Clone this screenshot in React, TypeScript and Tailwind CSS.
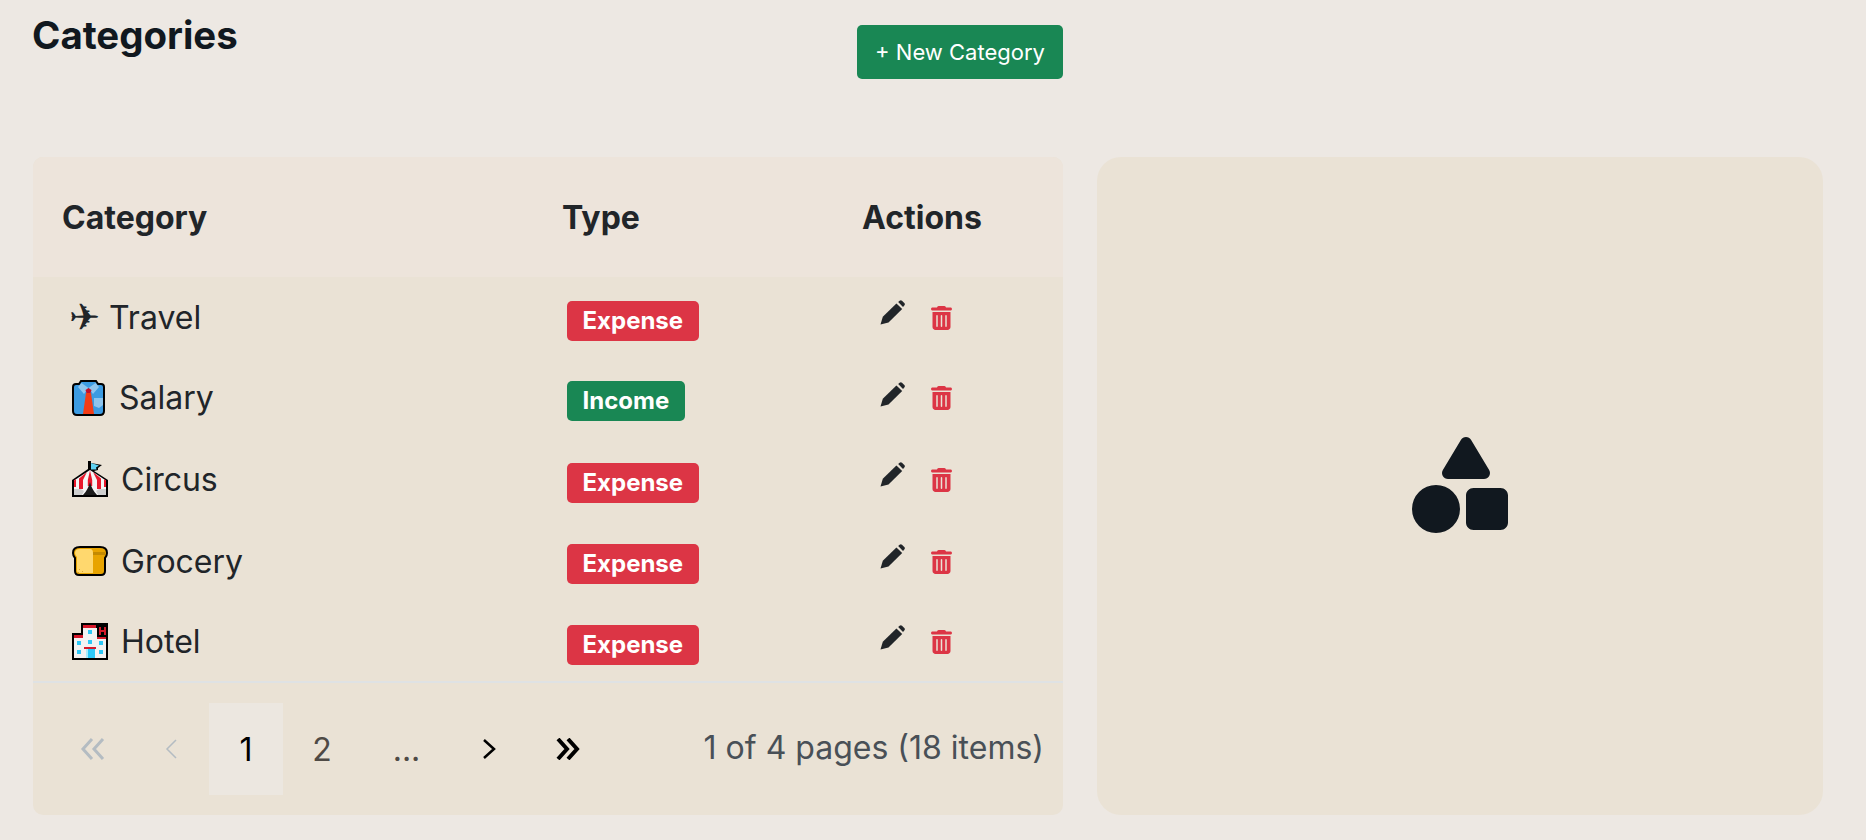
import React from "react";
import { FaTrashCan, FaShapes } from "react-icons/fa6";

const Pencil = ({ mb }: { mb: string }) => (
  <svg width="25" height="25" viewBox="0 0 25 25" className={`${mb} shrink-0 text-[#212529]`} fill="currentColor" role="img" aria-label="edit">
    <path d="M0.500 24.500L2.800 16.800 16.400 3.400 22.200 9 8.500 22.400z" />
    <path d="M18.200 1.900L19.600 0.700q1.200-.9 2.400 0l2.300 2.200q1.100 1.200 0 2.500l-1.300 1.500z" />
  </svg>
);

const Shirt = () => (
  <svg width="33" height="36" viewBox="0 0 33 36" role="img" aria-label="shirt" className="shrink-0">
    <path d="M9 1h15l2 3h3q3 0 3 3v24q0 4-4 4H5q-4 0-4-4V7q0-3 3-3h3z" fill="#3c9be2" stroke="#000" strokeWidth="2" />
    <path d="M9.500 3l7 5-4.500 6-6-7zM23.500 3l-7 5 4.500 6 6-7z" fill="#8ec5ee" />
    <path d="M14 13h5l3 21H11z" fill="#f23c16" />
    <path d="M13.500 10l3-2 3 2-1 3h-4z" fill="#c2102c" />
    <path d="M22 18h9v7l-4 3-5-2z" fill="#8ec5ee" />
  </svg>
);

const Circus = () => (
  <svg width="36" height="36" viewBox="0 0 36 36" role="img" aria-label="circus tent" className="shrink-0">
    <path d="M16 0h3v2l11 2-4 3 0 2-4 1 14 9v17H0V19l16-11z" fill="#000" />
    <path d="M19 2l8 2.500-3 2 .5 2-5.500 0z" fill="#5fd0f0" />
    <path d="M18 9L2 19.500V34h32V19.500z" fill="#f5f5f5" />
    <path d="M15 11L7 17.500V28h4V19zM18 9.500L15.800 19v6h4.400V19zM21 11l8 6.500V28h-4V19z" fill="#e8182c" />
    <path d="M2 19.500L4 18v8H2zM34 19.500L32 18v8h2z" fill="#e8182c" />
    <path d="M18 21q-2 8-7 13h14q-5-5-7-13z" fill="#1c1c1c" />
    <path d="M2 28h7l3 2-2 4H2zM34 28h-7l-3 2 2 4h8z" fill="#cfcfcf" />
  </svg>
);

const Bread = () => (
  <svg width="36" height="30" viewBox="0 0 36 30" role="img" aria-label="bread" className="shrink-0">
    <path d="M8 1h20q7 0 7 6 0 3-2 5v13q0 4-4 4H7q-4 0-4-4V12Q1 10 1 7q0-6 7-6z" fill="#e8a400" stroke="#000" strokeWidth="2" />
    <path d="M8 3h10q3 0 3 4v20H7q-2 0-2-2V11Q3 9 3 7q0-4 5-4z" fill="#ffd86e" />
    <path d="M21 6h12v3H21z" fill="#c48a00" />
    <path d="M7 23h1v1H7zM10 25h1v1h-1zM6 26h1v1H6z" fill="#d9a83a" />
  </svg>
);

const Hotel = () => (
  <svg width="36" height="37" viewBox="0 0 36 37" role="img" aria-label="hotel" className="shrink-0">
    <path d="M9 0h27v37H0V10h9z" fill="#000" />
    <path d="M11 2h13v3H11zM2 12h9v3H2zM26 15h8v3h-8z" fill="#d5182a" />
    <path d="M11 5h14v10h9v20H2V15h9z" fill="#f2f2f2" />
    <path d="M2 12h9v2H2zM25 14h9v2h-9z" fill="#d5182a" />
    <path d="M27 4h2v8h-2zM32 4h2v8h-2zM29 7h3v2h-3z" fill="#d5182a" />
    <path d="M16 7h4v4h-4zM16 17h4v4h-4zM5 18h4v4H5zM27 18h4v4h-4zM5 27h4v4H5zM27 27h4v4h-4z" fill="#2cc8f8" />
    <path d="M12 24h12v2H12z" fill="#d5182a" />
    <path d="M14 26h9v9h-9z" fill="#2cc8f8" />
    <path d="M14 26h2v9h-2z" fill="#a8ecfc" />
  </svg>
);

const Plane = () => (
  <span className="w-[33px] shrink-0 font-['DejaVu_Sans',sans-serif] text-[37px] leading-none">✈</span>
);

type Row = {
  icon: React.ReactNode;
  name: string;
  type: "Expense" | "Income";
  h: string;
  w: string;
  pl: string;
  textMt: string;
  trashMt: string;
  pencilMb: string;
};

const rows: Row[] = [
  { icon: <Plane />, name: "Travel", type: "Expense", h: "h-[80px]", w: "w-[40px]", pl: "pl-[36px]", textMt: "mt-[2px]", trashMt: "mt-[2px]", pencilMb: "mb-[9px]" },
  { icon: <Shirt />, name: "Salary", type: "Income", h: "h-[81px]", w: "w-[47px]", pl: "pl-[39px]", textMt: "mt-[1px]", trashMt: "mt-[0px]", pencilMb: "mb-[7px]" },
  { icon: <Circus />, name: "Circus", type: "Expense", h: "h-[82px]", w: "w-[49px]", pl: "pl-[39px]", textMt: "mt-[2px]", trashMt: "mt-[2px]", pencilMb: "mb-[9px]" },
  { icon: <Bread />, name: "Grocery", type: "Expense", h: "h-[81px]", w: "w-[49px]", pl: "pl-[39px]", textMt: "mt-[2px]", trashMt: "mt-[2px]", pencilMb: "mb-[9px]" },
  { icon: <Hotel />, name: "Hotel", type: "Expense", h: "h-[80px]", w: "w-[49px]", pl: "pl-[39px]", textMt: "mt-[1px]", trashMt: "mt-[1px]", pencilMb: "mb-[8px]" },
];

const Chevron = ({ d, sw }: { d: string; sw: number }) => (
  <svg width="26" height="22" viewBox="0 0 26 22" fill="none" stroke="currentColor" strokeWidth={sw}>
    <path d={d} />
  </svg>
);

export default function App() {
  return (
    <div className="min-h-[840px] w-full bg-[#ede8e3] pl-[33px] pr-[43px] font-['Inter',sans-serif] text-[#212529]">
      <div className="flex h-[157px] w-[1030px] items-start justify-between">
        <h1 className="ml-[-1px] mt-[11px] text-[38.4px] font-bold leading-[48px] text-[#11181f]">Categories</h1>
        <button className="mt-[25px] h-[54px] w-[206px] rounded-[5px] bg-[#198754] text-center text-[22px] leading-[54px] text-white">
          + New Category
        </button>
      </div>
      <div className="flex gap-[34px]">
        <div className="h-[658px] w-[1030px] overflow-hidden rounded-[10px] bg-[#eae2d5]">
          <table className="w-full table-fixed border-collapse">
            <colgroup>
              <col className="w-[499px]" />
              <col className="w-[300px]" />
              <col className="w-[231px]" />
            </colgroup>
            <thead>
              <tr className="h-[120px] bg-[#ede4db] text-left text-[32px] font-bold">
                <th className="pl-[29px] pt-[2px] font-bold">Category</th>
                <th className="pl-[30px] pt-[2px] font-bold">Type</th>
                <th className="pl-[30px] pt-[2px] font-bold">Actions</th>
              </tr>
            </thead>
            <tbody>
              {rows.map((r) => (
                <tr key={r.name} className={r.h}>
                  <td className={`${r.pl} text-[32px]`}>
                    <div className="flex items-center">
                      <span className={`flex shrink-0 items-center ${r.w}`}>{r.icon}</span>
                      <span className={r.textMt}>{r.name}</span>
                    </div>
                  </td>
                  <td className="pl-[35px]">
                    <span
                      className={`mt-[7px] inline-block h-[40px] rounded-[5px] px-[15.5px] text-[24px] font-bold leading-[40px] text-white ${
                        r.type === "Expense" ? "bg-[#dc3545]" : "bg-[#198754]"
                      }`}
                    >
                      {r.type}
                    </span>
                  </td>
                  <td className="pl-[48px]">
                    <div className="flex items-center gap-[26px]">
                      <Pencil mb={r.pencilMb} />
                      <FaTrashCan className={`${r.trashMt} h-[24px] w-[21px] text-[#dc3545]`} />
                    </div>
                  </td>
                </tr>
              ))}
            </tbody>
          </table>
          <div className="flex h-[134px] items-center justify-between border-t-2 border-[#dfe2e4] pr-[19px]">
            <div className="ml-[22px] flex h-[92px] items-center text-[32px]">
              <span className="flex w-[76px] justify-center text-[#b4bcc2]">
                <Chevron d="M12 1L3 11l9 10M23 1l-9 10 9 10" sw={3} />
              </span>
              <span className="ml-[2px] flex w-[76px] justify-center text-[#b4bcc2]">
                <Chevron d="M18 2l-9 9 9 9" sw={1.5} />
              </span>
              <span className="flex h-full w-[74px] items-center justify-center bg-[#ece7e0] pt-[2px] text-[#000]">1</span>
              <span className="flex w-[78px] justify-center pt-[2px] text-[#4f4a45]">2</span>
              <span className="flex w-[91px] justify-center pt-[2px] text-[#4f4a45]">...</span>
              <span className="flex w-[74px] justify-center text-[#000]">
                <Chevron d="M8 2l10 9-10 9" sw={2.5} />
              </span>
              <span className="flex w-[84px] justify-center text-[#000]">
                <Chevron d="M3 1l9 10-9 10M13 1l9 10-9 10" sw={4} />
              </span>
            </div>
            <span className="mb-[2px] text-[32px] text-[#495057]">1 of 4 pages (18 items)</span>
          </div>
        </div>
        <div className="flex h-[658px] w-[726px] items-center justify-center rounded-[24px] bg-[#eae2d5]">
          <FaShapes className="mb-[2px] h-[96px] w-[96px] text-[#11181f]" />
        </div>
      </div>
    </div>
  );
}
